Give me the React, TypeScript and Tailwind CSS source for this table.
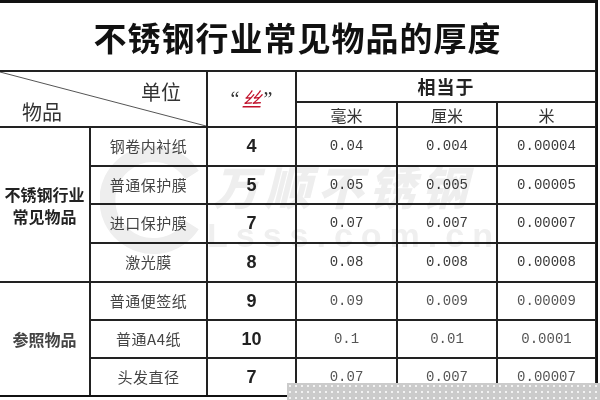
import React from "react"

const cjk = "font-['Noto_Sans_CJK_SC',sans-serif]"
const mono = "font-['Liberation_Mono','Noto_Sans_CJK_SC',monospace]"

interface Item {
  name: string
  si: string
  mm: string
  cm: string
  m: string
}

const steelItems: Item[] = [
  { name: "钢卷内衬纸", si: "4", mm: "0.04", cm: "0.004", m: "0.00004" },
  { name: "普通保护膜", si: "5", mm: "0.05", cm: "0.005", m: "0.00005" },
  { name: "进口保护膜", si: "7", mm: "0.07", cm: "0.007", m: "0.00007" },
  { name: "激光膜", si: "8", mm: "0.08", cm: "0.008", m: "0.00008" },
]

const refItems: Item[] = [
  { name: "普通便签纸", si: "9", mm: "0.09", cm: "0.009", m: "0.00009" },
  { name: "普通A4纸", si: "10", mm: "0.1", cm: "0.01", m: "0.0001" },
  { name: "头发直径", si: "7", mm: "0.07", cm: "0.007", m: "0.00007" },
]

const cell = "bg-white flex items-center justify-center"

function ItemCells({ item, light }: { item: Item; light?: boolean }) {
  const numColor = light ? "text-[#555]" : "text-[#3a3a3a]"
  return (
    <>
      <div className={`${cell} ${cjk} text-[15px] tracking-[0.5px] text-[#444]`}>{item.name}</div>
      <div className={`${cell} font-['Liberation_Sans',sans-serif] font-bold text-[18px] text-[#222]`}>{item.si}</div>
      <div className={`${cell} ${mono} text-[14px] ${numColor}`}>{item.mm}</div>
      <div className={`${cell} ${mono} text-[14px] ${numColor}`}>{item.cm}</div>
      <div className={`${cell} ${mono} text-[14px] ${numColor}`}>{item.m}</div>
    </>
  )
}

export default function App() {
  return (
    <div className="relative w-[600px] h-[400px] bg-white overflow-hidden">
      <div className="w-[598px] grid grid-cols-[89px_115px_87px_99px_98px_97px] grid-rows-[67px_29px_23px_37px_36px_37px_37px_36px_36px_36px] gap-[2px] bg-[#222] border-t-[3px] border-r-2 border-b-2 border-[#111]">
        {/* title */}
        <div className={`${cell} col-span-6 ${cjk} font-bold text-[33px] tracking-[1px] text-[#111] pt-[2px]`}>
          不锈钢行业常见物品的厚度
        </div>

        {/* header */}
        <div className={`relative bg-white col-span-2 row-span-2 ${cjk} text-[#333]`}>
          <svg className="absolute inset-0 w-full h-full" preserveAspectRatio="none">
            <line x1="0" y1="0" x2="100%" y2="100%" stroke="#555" strokeWidth="1" />
          </svg>
          <span className="absolute left-[141px] top-[10px] text-[20px] leading-none">单位</span>
          <span className="absolute left-[22px] top-[30px] text-[20px] leading-none">物品</span>
        </div>
        <div className={`${cell} row-span-2 text-[20px] text-[#333]`}>
          <span className="font-['Liberation_Serif',serif] mr-[2px]">“</span>
          <span className={`${cjk} italic text-[#c0102a]`}>丝</span>
          <span className="font-['Liberation_Serif',serif] ml-[2px]">”</span>
        </div>
        <div className={`${cell} col-span-3 ${cjk} font-bold text-[18px] tracking-[1px] text-[#222]`}>相当于</div>
        <div className={`${cell} ${cjk} text-[16px] text-[#333]`}>毫米</div>
        <div className={`${cell} ${cjk} text-[16px] text-[#333]`}>厘米</div>
        <div className={`${cell} ${cjk} text-[16px] text-[#333]`}>米</div>

        {/* stainless steel items */}
        <div className={`${cell} row-span-4 flex-col ${cjk} font-bold text-[16px] leading-[22px] text-[#222]`}>
          <span>不锈钢行业</span>
          <span>常见物品</span>
        </div>
        {steelItems.map((item) => (
          <ItemCells key={item.name} item={item} />
        ))}

        {/* reference items */}
        <div className={`${cell} row-span-3 ${cjk} font-bold text-[16px] text-[#444]`}>参照物品</div>
        {refItems.map((item) => (
          <ItemCells key={item.name} item={item} light />
        ))}
      </div>

      {/* watermark */}
      <div className="pointer-events-none absolute left-[95px] top-[140px] w-[400px] h-[120px] mix-blend-multiply">
        <svg className="absolute left-[5px] top-[5px]" width="110" height="110" viewBox="0 0 110 110">
          <path d="M92 30 A46 46 0 1 0 92 80" fill="none" stroke="#eeeeee" strokeWidth="16" />
        </svg>
        <div className={`absolute left-[118px] top-[22px] ${cjk} font-black italic text-[46px] leading-none tracking-[6px] text-[#eeeeee]`}>
          万顺不锈钢
        </div>
        <div className="absolute left-[112px] top-[78px] font-['Liberation_Sans',sans-serif] font-bold text-[34px] leading-none tracking-[8px] text-[#efefef]">
          Lsss.com.cn
        </div>
      </div>

      {/* loading strip at bottom */}
      <div className="absolute left-[287px] top-[383px] w-[313px] h-[17px] bg-[#cbcbcb] bg-[radial-gradient(circle,#f2f2f2_1px,transparent_1.3px)] bg-[length:6px_6px]" />
    </div>
  )
}
